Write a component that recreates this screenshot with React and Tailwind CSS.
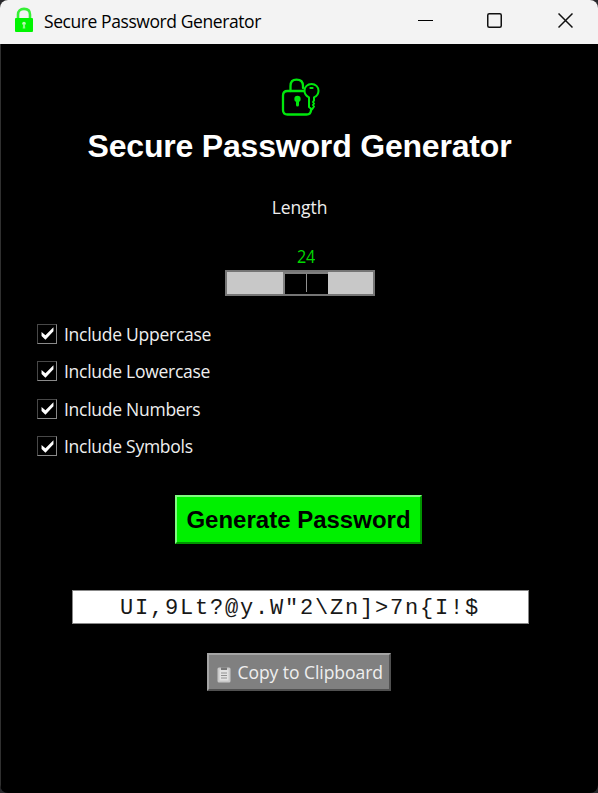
const OPTIONS = ["Uppercase", "Lowercase", "Numbers", "Symbols"];

function TitleBar() {
  return (
    <header className="flex h-11 shrink-0 items-center bg-[#f3f3f3] pl-[14px] text-black">
      <svg width="20" height="26" viewBox="0 0 20 26" className="-mt-[5px]">
        <path d="M4 12V7.500C4 4 6.300 1.900 10 1.900s6 2.100 6 5.600V12" fill="none" stroke="#35f035" strokeWidth="2.600" />
        <rect x="1" y="11" width="18" height="14" rx="1" fill="#00f500" />
        <circle cx="10" cy="16.5" r="1.8" fill="#b8f8b0" />
        <path d="M9.2 17h1.6l.5 4.5H8.7z" fill="#8df58a" />
      </svg>
      <span className="-mt-[3px] ml-[10px] w-[330px] whitespace-nowrap text-[17.5px] leading-6 tracking-[-0.42px]">
        Secure Password Generator
      </span>
      <div className="-mt-[3px] ml-[44px] flex items-center">
        <svg width="15" height="16" viewBox="0 0 15 16">
          <path d="M0 7.5h15" stroke="#000" />
        </svg>
        <svg width="15" height="16" viewBox="0 0 15 16" className="ml-[54px]">
          <rect x=".75" y=".75" width="13.5" height="13.5" rx="1.5" fill="none" stroke="#111" strokeWidth="1.5" />
        </svg>
        <svg width="15" height="16" viewBox="0 0 15 16" className="ml-[56px]">
          <path d="M.5 .5l14 14M14.5 .5l-14 14" stroke="#111" strokeWidth="1.5" />
        </svg>
      </div>
    </header>
  );
}

function LockKeyIcon() {
  return (
    <svg width="40" height="40" viewBox="0 0 40 40" fill="none" stroke="#00e80c" strokeWidth="2.3" strokeLinecap="round" strokeLinejoin="round">
      <path d="M31 33c0 3-1.500 4.500-4.500 4.500H7.500C4.500 37.500 3 36 3 33V18.500c0-3 1.500-4.500 4.500-4.500H24" />
      <path d="M10.500 14V9c0-4 2-6.300 6-6.300S23 5 23 9v2" />
      <circle cx="17.500" cy="22" r="2" fill="#00e80c" />
      <path d="M17.500 22v6" strokeWidth="3" />
      <path d="M29 20.300C26 19 24.500 16.500 24.500 13.800c0-4 3-6.800 7-6.800s7 2.800 7 6.800c0 2.900-1.600 5.300-4.500 6.500v3.200l-1 1.500 1 1.500-1 1.500 1 1.500-2 3-3-2.500z" strokeWidth="2" />
      <path d="M30.300 11h2.400" strokeWidth="1.800" />
    </svg>
  );
}

function Slider() {
  return (
    <div className="mt-[2px] ml-px flex h-[26px] w-[150px] border-2 border-[#757575] bg-[#c8c8c8]">
      <div className="ml-[56px] flex h-[22px] w-[45px] border-t-2 border-l-2 border-[#808080] bg-black">
        <div className="h-[18px] w-[22px] border-r border-[#909090]" />
      </div>
    </div>
  );
}

function Option({ name }) {
  return (
    <label className="flex h-[37.5px] items-center">
      <span className="flex size-5 items-center justify-center border border-t-[#484848] border-r-[#8a8a8a] border-b-[#8a8a8a] border-l-[#484848]">
        <svg width="13" height="13" viewBox="0 0 12 12">
          <path d="M.5 4.500v3.800l3.600 3.500L11.500 4V.3L4.100 7.500z" fill="#fff" />
        </svg>
      </span>
      <span className="ml-[7px] text-[17.5px] leading-6 tracking-[-0.27px]">Include {name}</span>
    </label>
  );
}

export default function App() {
  return (
    <div className="h-[793px] w-[598px] overflow-hidden bg-[#28282c] font-['Open_Sans','Noto_Sans',sans-serif]">
      <div className="flex h-full flex-col overflow-hidden rounded-lg bg-black text-[#efefef]">
        <TitleBar />
        <main className="flex flex-1 flex-col items-center border-l border-[#303030]">
          <div className="mt-[33px]">
            <LockKeyIcon />
          </div>
          <h1 className="mt-[9px] font-['Liberation_Sans',sans-serif] text-[32px] leading-10 font-bold tracking-[-0.19px] whitespace-nowrap text-white">
            Secure Password Generator
          </h1>
          <div className="mt-[29px] text-[17.5px] leading-6 tracking-[-0.1px]">Length</div>
          <div className="mt-[25px] ml-[13px] scale-x-90 text-[18px] leading-6 tracking-[-0.4px] text-[#00d900]">24</div>
          <Slider />
          <div className="mt-[19px] w-full pl-9">
            {OPTIONS.map((name) => (
              <Option key={name} name={name} />
            ))}
          </div>
          <button className="mt-[30px] mr-[2px] h-[49px] w-[247px] border-2 border-t-[#80f980] border-r-[#009500] border-b-[#009500] border-l-[#80f980] bg-[#00f000] font-['Liberation_Sans',sans-serif] text-2xl font-bold whitespace-nowrap text-black">
            Generate Password
          </button>
          <div className="mt-[46px] ml-px flex h-[34px] w-[457px] items-center justify-center border border-[#888] bg-white pt-[3px] font-['Liberation_Mono',monospace] text-[22px] tracking-[1.8px] text-[#181818]">
            {'UI,9Lt?@y.W"2\\Zn]>7n{I!$'}
          </div>
          <button className="mt-[29px] mr-[2px] flex h-[38px] w-[184px] items-center border-2 border-t-[#a5a5a5] border-r-[#505050] border-b-[#505050] border-l-[#a5a5a5] bg-[#808080] pl-2">
            <svg width="14" height="17" viewBox="0 0 14 17" className="mt-[5px]">
              <rect x=".5" y="1.500" width="13" height="15" rx="1.500" fill="#c9c9c9" />
              <path d="M2.500 3.500h9v11h-9z" fill="#e2e2e2" />
              <path d="M4 1.500h6v2.500H4z" fill="#777" />
              <path d="M4 7h6M4 9.500h6M4 12h6" stroke="#888" strokeWidth=".9" />
            </svg>
            <span className="ml-[7px] text-[17.5px] leading-6 tracking-[-0.05px] whitespace-nowrap">Copy to Clipboard</span>
          </button>
        </main>
      </div>
    </div>
  );
}
